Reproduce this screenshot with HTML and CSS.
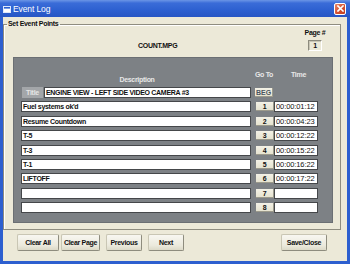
FILE: index.html
```html
<!DOCTYPE html>
<html>
<head>
<meta charset="utf-8">
<title>Event Log</title>
<link rel="stylesheet" href="styles.css">
</head>
<body>
<div class="win">
  <div class="titlebar">
    <svg class="appicon" width="8" height="7" viewBox="0 0 8 7"><rect x="0.5" y="0.5" width="7" height="6" fill="#fff" stroke="#dfe8fb"/><rect x="1" y="1" width="6" height="1.6" fill="#2a5fd0"/></svg>
    <span class="title">Event Log</span>
    <span class="close"><svg width="7" height="7" viewBox="0 0 7 7"><path d="M1 1L6 6M6 1L1 6" stroke="#fff" stroke-width="1.6" stroke-linecap="square"/></svg></span>
  </div>
  <div class="client">
    <fieldset class="group">
      <legend>Set Event Points</legend>
      <div class="filebar">
        <span class="file">COUNT.MPG</span>
        <div class="page">
          <span class="page-label">Page #</span>
          <span class="pagebox">1</span>
        </div>
      </div>
      <div class="panel">
        <div class="head">
          <span class="h-desc">Description</span>
          <span class="h-go">Go To</span>
          <span class="h-time">Time</span>
        </div>
        <div class="rows">
          <div class="row">
            <div class="desc titled"><span class="tlabel">Title</span><span class="field">ENGINE VIEW - LEFT SIDE VIDEO CAMERA #3</span></div>
            <span class="go beg">BEG</span>
          </div>
          <div class="row">
            <span class="desc field">Fuel systems ok'd</span>
            <span class="go">1</span><span class="time">00:00:01:12</span>
          </div>
          <div class="row">
            <span class="desc field">Resume Countdown</span>
            <span class="go">2</span><span class="time">00:00:04:23</span>
          </div>
          <div class="row">
            <span class="desc field">T-5</span>
            <span class="go">3</span><span class="time">00:00:12:22</span>
          </div>
          <div class="row">
            <span class="desc field">T-3</span>
            <span class="go">4</span><span class="time">00:00:15:22</span>
          </div>
          <div class="row">
            <span class="desc field">T-1</span>
            <span class="go">5</span><span class="time">00:00:16:22</span>
          </div>
          <div class="row">
            <span class="desc field">LIFTOFF</span>
            <span class="go">6</span><span class="time">00:00:17:22</span>
          </div>
          <div class="row">
            <span class="desc field"></span>
            <span class="go">7</span><span class="time"></span>
          </div>
          <div class="row">
            <span class="desc field"></span>
            <span class="go">8</span><span class="time"></span>
          </div>
        </div>
      </div>
    </fieldset>
    <div class="buttons">
      <span class="btn b-clearall">Clear All</span>
      <span class="btn b-clearpage">Clear Page</span>
      <span class="btn b-prev">Previous</span>
      <span class="btn b-next">Next</span>
      <span class="btn b-save">Save/Close</span>
    </div>
  </div>
</div>
</body>
</html>
```
FILE: styles.css
```css
* { box-sizing: border-box; }
html, body { margin: 0; padding: 0; }
body {
  width: 350px;
  height: 264px;
  overflow: hidden;
  font-family: "Liberation Sans", Arial, sans-serif;
  font-size: 7px;
  letter-spacing: -0.3px;
  color: #111;
  white-space: nowrap;
}
.win {
  width: 350px;
  height: 264px;
  display: flex;
  flex-direction: column;
  background: #2d5fcf;
}
.titlebar {
  height: 17px;
  flex: none;
  display: flex;
  align-items: center;
  padding: 0 4px 0 3px;
  background: linear-gradient(#6b95e6 0%, #3a6cd8 18%, #2d60d0 60%, #2756c4 100%);
}
.appicon { flex: none; margin-top: 1px; }
.title {
  color: #fff;
  font-size: 8.5px;
  letter-spacing: -0.1px;
  margin-left: 2px;
}
.close {
  margin-left: auto;
  width: 12px;
  height: 12px;
  border: 1px solid #fff;
  border-radius: 2px;
  background: linear-gradient(135deg, #e98a6a, #d4502f 55%, #bf3d22);
  display: flex;
  align-items: center;
  justify-content: center;
}
.close svg { display: block; }
.client {
  flex: 1;
  margin: 0 3px 3px 3px;
  background: #ece9d8;
  display: flex;
  flex-direction: column;
}
.group {
  margin: 2px 6px 0 0;
  padding: 0;
  border: 1px solid #8f8d80;
  box-shadow: inset 1px 1px 0 #fff;
  min-width: 0;
  height: 211px;
  display: flex;
  flex-direction: column;
}
legend {
  font-weight: bold;
  line-height: 10px;
  margin-left: 3px;
  padding: 0 2px 0 1px;
  color: #111;
}
.filebar {
  height: 28px;
  display: flex;
  align-items: flex-start;
  font-weight: bold;
}
.file {
  margin-left: 134px;
  margin-top: 13px;
  line-height: 8px;
}
.page {
  margin-left: auto;
  margin-right: 13px;
  display: flex;
  flex-direction: column;
  align-items: center;
  width: 24px;
}
.page-label { line-height: 8px; }
.pagebox {
  margin-top: 3px;
  width: 14px;
  height: 11px;
  border: 1px solid;
  border-color: #8d8b7e #fff #fff #8d8b7e;
  box-shadow: inset 1px 1px 0 #c9c6b6;
  text-align: center;
  line-height: 9px;
}
.panel {
  margin: 0 7px 6px 9px;
  height: 166px;
  background: #7d8185;
  border: 1px solid #6b6f73;
  padding: 12px 0 0 7px;
}
.head {
  height: 17px;
  display: flex;
  color: #e8e8e8;
  font-weight: bold;
}
.h-desc {
  width: 230px;
  text-align: center;
  padding-left: 2px;
  margin-top: 6px;
}
.h-go { margin-left: 3px; width: 20px; text-align: center; margin-top: 1px; }
.h-time { margin-left: 17px; margin-top: 1px; }
.rows {
  display: flex;
  flex-direction: column;
  gap: 3.375px;
}
.row {
  height: 11px;
  display: flex;
  align-items: center;
}
.desc { width: 230px; height: 11px; flex: none; }
.field {
  display: block;
  height: 11px;
  background: #fff;
  border: 1px solid #45474a;
  padding-left: 1px;
  font-weight: bold;
  line-height: 9px;
  overflow: hidden;
}
.titled { display: flex; }
.tlabel {
  width: 21px;
  height: 11px;
  margin-left: 1px;
  background: #a3a6a9;
  color: #e6e6e6;
  font-weight: bold;
  text-align: center;
  line-height: 11px;
}
.titled .field { flex: 1; margin-left: 1px; }
.go {
  flex: none;
  margin-left: 5px;
  width: 18px;
  height: 9px;
  background: linear-gradient(#f3f1e6, #e6e3d0);
  border-right: 1px solid #9c9a8c;
  border-bottom: 1px solid #9c9a8c;
  text-align: center;
  font-weight: bold;
  line-height: 9px;
}
.beg {
  margin-left: 4px;
  color: #4a5560;
  letter-spacing: 0;
}
.time {
  flex: none;
  width: 44px;
  height: 11px;
  background: #fff;
  border: 1px solid #45474a;
  font-size: 7.5px;
  letter-spacing: -0.1px;
  line-height: 9px;
  padding-left: 1px;
  overflow: hidden;
}
.buttons {
  display: flex;
  align-items: flex-start;
  padding-left: 14px;
  margin-top: 4px;
}
.btn {
  height: 17px;
  border: 1px solid #c9c6b4;
  border-right-color: #8e8c7e;
  border-bottom-color: #8e8c7e;
  border-radius: 2px;
  background: linear-gradient(#f8f7f1, #ebe9dc 70%, #dcd9c8);
  font-weight: bold;
  line-height: 15px;
  text-align: center;
}
.b-clearall { width: 42px; }
.b-clearpage { width: 39px; margin-left: 2px; }
.b-prev { width: 36px; margin-left: 6px; }
.b-next { width: 36px; margin-left: 6px; }
.b-save { width: 46px; margin-left: auto; margin-right: 20px; }
```
